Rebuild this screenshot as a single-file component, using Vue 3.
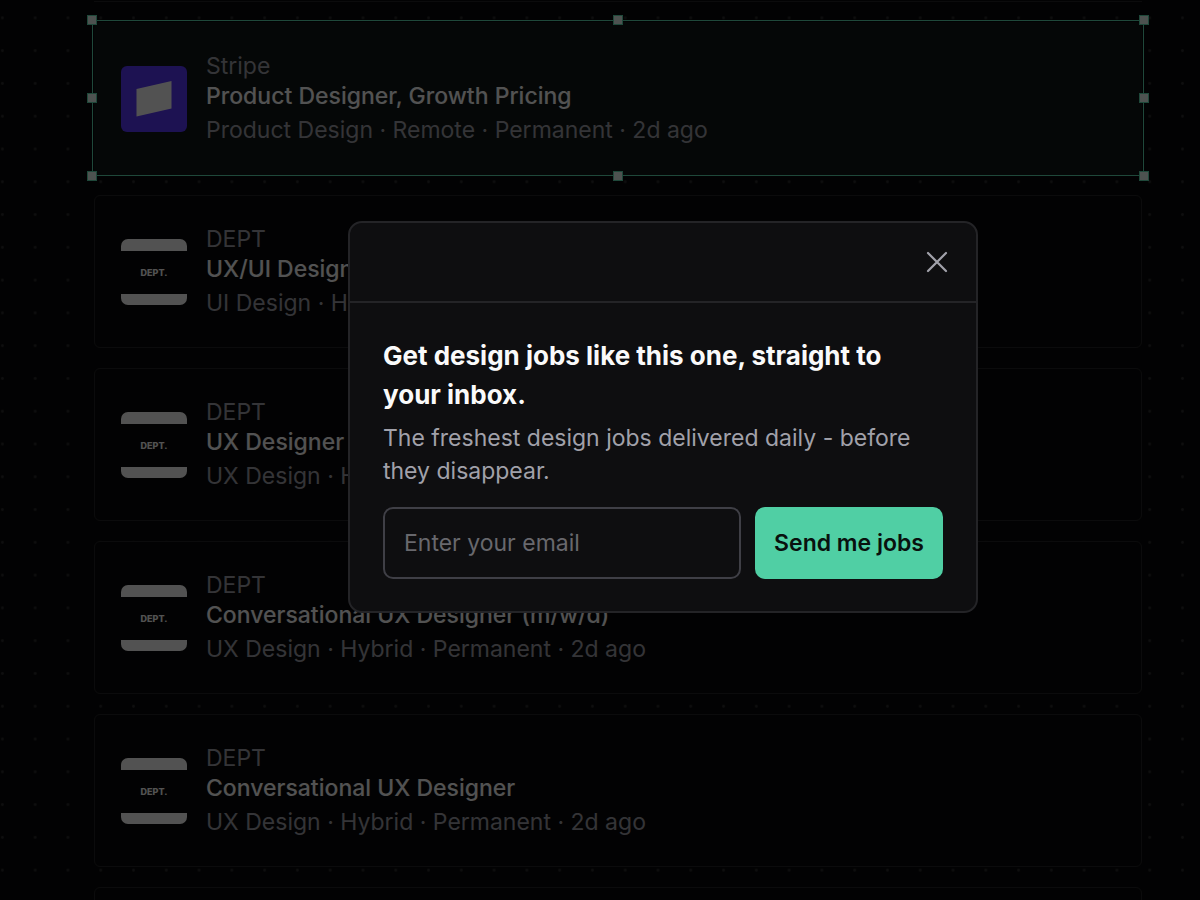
<script setup>
import { ref } from 'vue'

const email = ref('')
const open = ref(true)

const handles = [
  'top left', 'top center', 'top right',
  'middle left', 'middle right',
  'bottom left', 'bottom center', 'bottom right',
]

const jobs = [
  { id: 1, company: 'Stripe', title: 'Product Designer, Growth Pricing', meta: 'Product Design · Remote · Permanent · 2d ago', logo: 'stripe', selected: true },
  { id: 2, company: 'DEPT', title: 'UX/UI Designer', meta: 'UI Design · Hybrid · Permanent · 2d ago', logo: 'dept' },
  { id: 3, company: 'DEPT', title: 'UX Designer', meta: 'UX Design · Hybrid · Permanent · 2d ago', logo: 'dept' },
  { id: 4, company: 'DEPT', title: 'Conversational UX Designer (m/w/d)', meta: 'UX Design · Hybrid · Permanent · 2d ago', logo: 'dept' },
  { id: 5, company: 'DEPT', title: 'Conversational UX Designer', meta: 'UX Design · Hybrid · Permanent · 2d ago', logo: 'dept' },
]
</script>

<template>
  <div class="page">
    <svg class="dots" aria-hidden="true">
      <defs>
        <pattern id="dot-grid" x="-14" y="1.5" width="32.78" height="32.78" patternUnits="userSpaceOnUse">
          <circle cx="16.4" cy="16.4" r="1.4" fill="#2e2e30" />
        </pattern>
      </defs>
      <rect width="100%" height="100%" fill="url(#dot-grid)" />
    </svg>

    <main class="list">
      <div class="card-end"></div>
      <article v-for="job in jobs" :key="job.id" class="card" :class="{ selected: job.selected }">
        <svg v-if="job.logo === 'stripe'" class="logo" viewBox="0 0 66 66" aria-hidden="true">
          <rect width="66" height="66" rx="6" fill="#5b38ff" />
          <path d="M15.5 23 50.5 15v27.5l-35 8z" fill="#fff" />
        </svg>
        <div v-else class="logo dept">DEPT.</div>
        <div class="info">
          <p class="company">{{ job.company }}</p>
          <h3 class="title">{{ job.title }}</h3>
          <p class="meta">{{ job.meta }}</p>
        </div>
        <div v-if="job.selected" class="frame" aria-hidden="true">
          <i v-for="h in handles" :key="h" class="handle" :class="h"></i>
        </div>
      </article>
      <div class="card-start"></div>
    </main>

    <div v-if="open" class="scrim">
      <section class="modal" role="dialog" aria-modal="true" aria-labelledby="modal-title">
        <header class="modal-head">
          <button class="close" type="button" aria-label="Close" @click="open = false">
            <svg viewBox="0 0 24 24" fill="none" stroke="currentColor" stroke-width="2.2" stroke-linecap="round">
              <path d="M3 3 21 21M21 3 3 21" />
            </svg>
          </button>
        </header>
        <div class="modal-body">
          <h2 id="modal-title">Get design jobs like this one, straight to your inbox.</h2>
          <p class="lead">The freshest design jobs delivered daily - before they disappear.</p>
          <form class="form" @submit.prevent>
            <input v-model="email" type="email" placeholder="Enter your email" aria-label="Email" />
            <button class="send" type="submit">Send me jobs</button>
          </form>
        </div>
      </section>
    </div>
  </div>
</template>

<style>
body {
  background: #050506;
}
</style>

<style scoped>
* {
  box-sizing: border-box;
}
.page {
  position: relative;
  height: 100vh;
  overflow: hidden;
  background: #09090a;
  font-family: Inter, "Liberation Sans", sans-serif;
  font-size: 23px;
}
.dots {
  position: absolute;
  inset: 0;
  width: 100%;
  height: 100%;
}
.list {
  position: relative;
  display: flex;
  flex-direction: column;
  gap: 20px;
  padding: 0 58px 0 94px;
}
.card-end {
  height: 2px;
  border-bottom: 1px solid #242427;
}
.card-start {
  height: 40px;
  border: 1px solid #242427;
  border-radius: 6px 6px 0 0;
  background: #09090a;
}
.card {
  position: relative;
  display: flex;
  align-items: center;
  gap: 19px;
  height: 153px;
  padding: 0 26px;
  border: 1px solid #242427;
  border-radius: 6px;
  background: #09090a;
}
.card.selected {
  border-color: transparent;
  background: #101716;
}
.logo {
  flex: none;
  width: 66px;
  height: 66px;
}
.dept {
  display: flex;
  align-items: center;
  justify-content: center;
  border: solid #fff;
  border-width: 12px 0 11px;
  border-radius: 7px;
  color: #fff;
  font-size: 9px;
  font-weight: 800;
}
.info {
  padding-top: 2px;
}
.info p,
.info h3 {
  margin: 0;
  white-space: nowrap;
}
.company {
  color: #a1a1aa;
  line-height: 28px;
}
.title {
  color: #fff;
  font-size: 23px;
  font-weight: 500;
  line-height: 32px;
}
.meta {
  color: #a1a1aa;
  line-height: 36px;
}
.frame {
  position: absolute;
  inset: -3px -3px -2px;
  border: 1px solid #60e0b4;
}
.handle {
  position: absolute;
  width: 10px;
  height: 10px;
  border: 1px solid #60e0b4;
  background: #eefff8;
}
.top { top: -6px; }
.middle { top: calc(50% - 5px); }
.bottom { bottom: -6px; }
.left { left: -6px; }
.center { left: calc(50% - 5px); }
.right { right: -6px; }
.scrim {
  position: absolute;
  inset: 0;
  display: flex;
  align-items: center;
  justify-content: center;
  padding: 0 0 66px 126px;
  background: rgba(0, 0, 0, 0.68);
}
.modal {
  width: 100%;
  max-width: 630px;
  border: 2px solid #242427;
  border-radius: 14px;
  background: #0e0e10;
}
.modal-head {
  display: flex;
  align-items: center;
  justify-content: flex-end;
  height: 80px;
  padding: 0 27px;
  border-bottom: 2px solid #242427;
}
.close {
  display: flex;
  padding: 0;
  border: 0;
  background: none;
  color: #a1a1aa;
}
.close svg {
  width: 24px;
  height: 24px;
}
.modal-body {
  padding: 33px 33px 32px;
}
h2 {
  margin: 0 0 8px;
  color: #fafafa;
  font-size: 26px;
  font-weight: 700;
  line-height: 39px;
}
.lead {
  margin: 0;
  color: #a1a1aa;
  line-height: 33px;
}
.form {
  display: flex;
  gap: 14px;
  margin-top: 19px;
}
input {
  flex: 1;
  min-width: 0;
  height: 72px;
  padding: 0 19px;
  border: 2px solid #3f3f46;
  border-radius: 10px;
  background: transparent;
  color: #fafafa;
  font: inherit;
}
input::placeholder {
  color: #68686d;
  opacity: 1;
}
.send {
  flex: none;
  padding: 0 19px;
  border: 0;
  border-radius: 10px;
  background: #50cfa4;
  color: #09110e;
  font: inherit;
  font-weight: 600;
}
</style>
